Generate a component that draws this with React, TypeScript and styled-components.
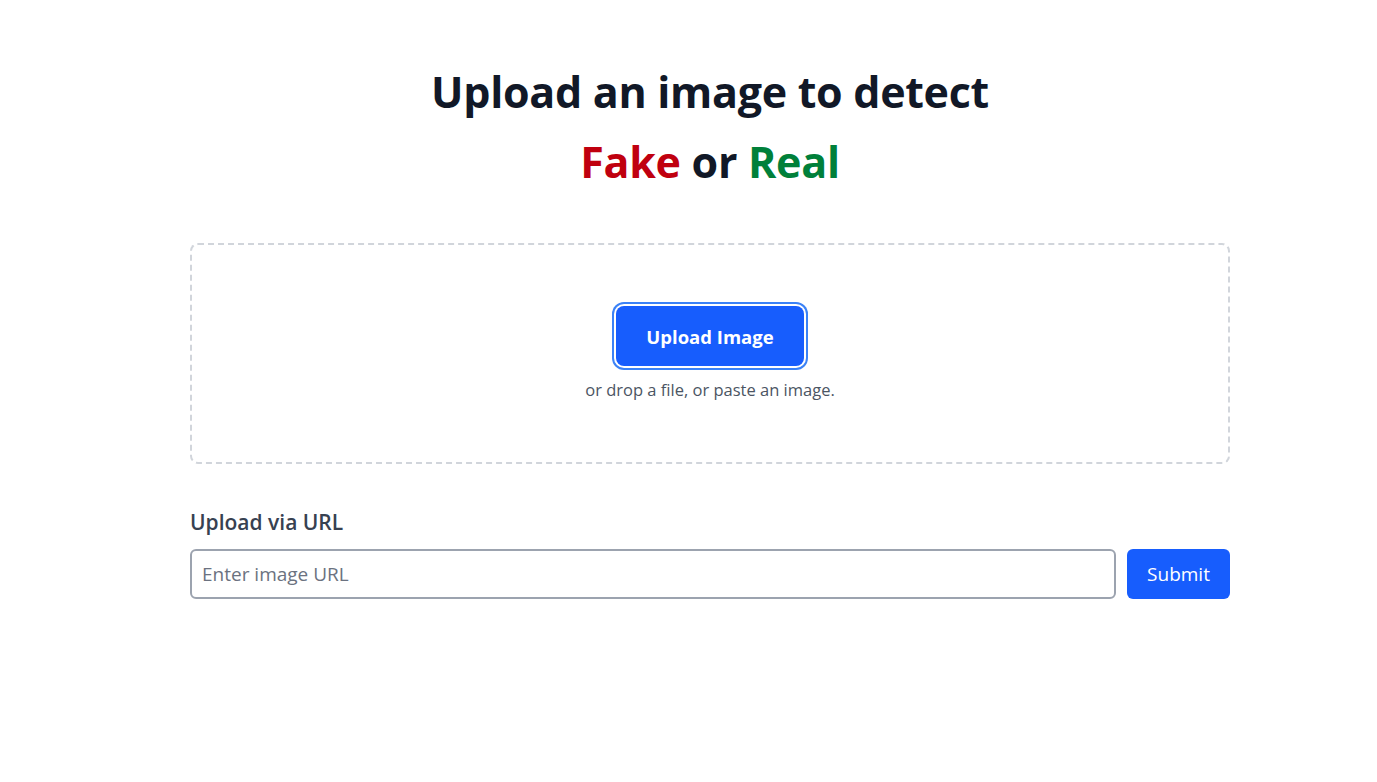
import React from "react";
import styled, { createGlobalStyle } from "styled-components";

const Global = createGlobalStyle`
  html, body { margin: 0; padding: 0; background: #ffffff; }
  body { font-family: "Open Sans", "Noto Sans", sans-serif; }
  * { box-sizing: border-box; }
`;

const Page = styled.main`
  width: 1040px;
  margin-left: 190px;
  padding-top: 57px;
  display: flex;
  flex-direction: column;
`;

const Title = styled.h1`
  margin: 0;
  text-align: center;
  font-size: 43px;
  line-height: 70px;
  font-weight: 700;
  color: #111827;
  letter-spacing: -0.3px;
`;

const Word = styled.span<{ $tone: "fake" | "real" }>`
  color: ${(p) => (p.$tone === "fake" ? "#c0000f" : "#00803a")};
`;

const DropZone = styled.section`
  margin-top: 46px;
  height: 221px;
  border: 2px dashed #d1d5db;
  border-radius: 8px;
  display: flex;
  flex-direction: column;
  align-items: center;
  justify-content: center;
  gap: 13px;
`;

const UploadButton = styled.button`
  width: 188px;
  height: 60px;
  border: none;
  border-radius: 8px;
  background: #175dfd;
  color: #ffffff;
  font-family: inherit;
  font-size: 18.5px;
  font-weight: 700;
  cursor: pointer;
  box-shadow: 0 0 0 2px #ffffff, 0 0 0 4px #3b82f6;
`;

const Hint = styled.p`
  margin: 0;
  font-size: 16.5px;
  line-height: 22px;
  color: #4b5563;
`;

const UrlSection = styled.section`
  margin-top: 44px;
  display: flex;
  flex-direction: column;
  gap: 13px;
`;

const Label = styled.label`
  font-size: 21px;
  font-weight: 600;
  color: #374151;
`;

const Row = styled.form`
  display: flex;
  gap: 11px;
`;

const UrlInput = styled.input`
  flex: 1;
  height: 50px;
  border: 2px solid #9ca3af;
  border-radius: 6px;
  padding: 0 10px;
  font-family: inherit;
  font-size: 19px;
  color: #111827;
  outline: none;
  &::placeholder { color: #6b7280; }
`;

const SubmitButton = styled.button`
  width: 103px;
  height: 50px;
  border: none;
  border-radius: 6px;
  background: #175dfd;
  color: #ffffff;
  font-family: inherit;
  font-size: 19px;
  cursor: pointer;
`;

export default function App() {
  return (
    <>
      <Global />
      <Page>
        <Title>Upload an image to detect</Title>
        <Title>
          <Word $tone="fake">Fake</Word> or <Word $tone="real">Real</Word>
        </Title>
        <DropZone>
          <UploadButton type="button">Upload Image</UploadButton>
          <Hint>or drop a file, or paste an image.</Hint>
        </DropZone>
        <UrlSection>
          <Label htmlFor="url">Upload via URL</Label>
          <Row onSubmit={(e) => e.preventDefault()}>
            <UrlInput id="url" placeholder="Enter image URL" />
            <SubmitButton type="submit">Submit</SubmitButton>
          </Row>
        </UrlSection>
      </Page>
    </>
  );
}
